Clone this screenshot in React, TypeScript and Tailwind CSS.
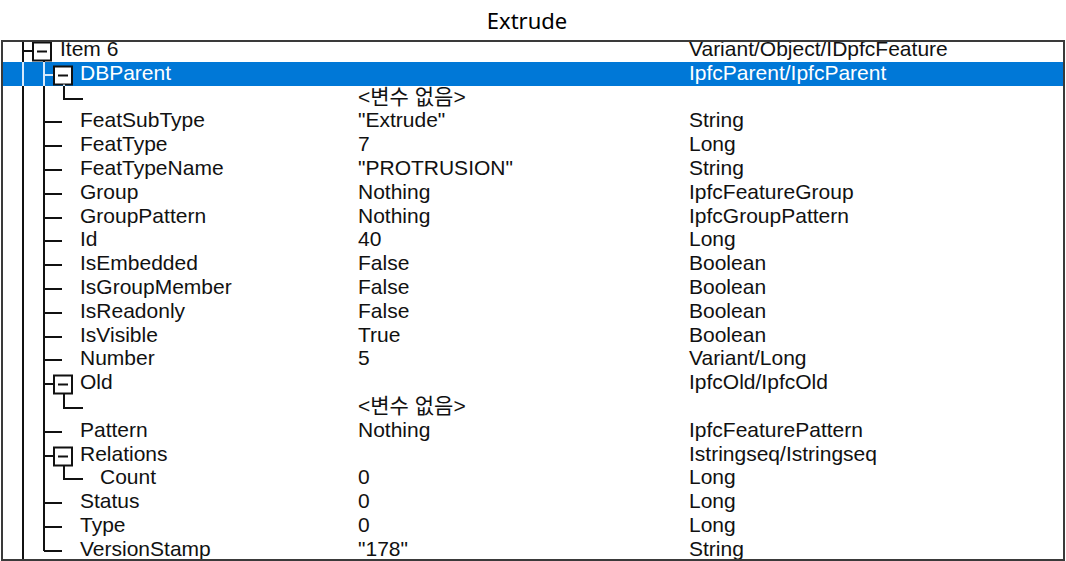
import React from 'react';

type Kind = 'root' | 'branch' | 'leaf' | 'last' | 'child';

type Row = {
  name?: string;
  value?: string;
  type?: string;
  kind: Kind;
  selected?: boolean;
};

const rows: Row[] = [
  { name: 'Item 6', type: 'Variant/Object/IDpfcFeature', kind: 'root' },
  { name: 'DBParent', type: 'IpfcParent/IpfcParent', kind: 'branch', selected: true },
  { value: '<변수 없음>', kind: 'child' },
  { name: 'FeatSubType', value: '"Extrude"', type: 'String', kind: 'leaf' },
  { name: 'FeatType', value: '7', type: 'Long', kind: 'leaf' },
  { name: 'FeatTypeName', value: '"PROTRUSION"', type: 'String', kind: 'leaf' },
  { name: 'Group', value: 'Nothing', type: 'IpfcFeatureGroup', kind: 'leaf' },
  { name: 'GroupPattern', value: 'Nothing', type: 'IpfcGroupPattern', kind: 'leaf' },
  { name: 'Id', value: '40', type: 'Long', kind: 'leaf' },
  { name: 'IsEmbedded', value: 'False', type: 'Boolean', kind: 'leaf' },
  { name: 'IsGroupMember', value: 'False', type: 'Boolean', kind: 'leaf' },
  { name: 'IsReadonly', value: 'False', type: 'Boolean', kind: 'leaf' },
  { name: 'IsVisible', value: 'True', type: 'Boolean', kind: 'leaf' },
  { name: 'Number', value: '5', type: 'Variant/Long', kind: 'leaf' },
  { name: 'Old', type: 'IpfcOld/IpfcOld', kind: 'branch' },
  { value: '<변수 없음>', kind: 'child' },
  { name: 'Pattern', value: 'Nothing', type: 'IpfcFeaturePattern', kind: 'leaf' },
  { name: 'Relations', type: 'Istringseq/Istringseq', kind: 'branch' },
  { name: 'Count', value: '0', type: 'Long', kind: 'child' },
  { name: 'Status', value: '0', type: 'Long', kind: 'leaf' },
  { name: 'Type', value: '0', type: 'Long', kind: 'leaf' },
  { name: 'VersionStamp', value: '"178"', type: 'String', kind: 'last' },
];

// x of the tree guide lines, inside the list
const L0 = 20;
const L1 = 41;
const L2 = 61;
const YC = 13;

const Box = ({ x, down, line }: { x: number; down: number; line: string }) => (
  <g>
    <rect x={x} y={4.5} width={18} height={18} fill="#fff" stroke="#111" strokeWidth={2} />
    <line x1={x + 4} y1={13.5} x2={x + 14} y2={13.5} stroke="#111" strokeWidth={2} />
    <line x1={down} y1={22.5} x2={down} y2={24} stroke={line} strokeWidth={2} />
  </g>
);

const TreeLines = ({ kind, selected }: { kind: Kind; selected?: boolean }) => {
  const c = selected ? '#d6e9fb' : '#111';
  const w = kind === 'child' ? 97 : kind === 'root' ? 57 : 77;
  return (
    <svg width={w} height={24} className="shrink-0 overflow-visible">
      <line x1={L0} y1={0} x2={L0} y2={24} stroke={c} strokeWidth={2} />
      {kind === 'root' && (
        <g>
          <line x1={L0} y1={YC} x2={29} y2={YC} stroke={c} strokeWidth={2} />
          <Box x={30} down={L1} line={c} />
        </g>
      )}
      {kind !== 'root' && (
        <line x1={L1} y1={0} x2={L1} y2={kind === 'last' ? YC : 24} stroke={c} strokeWidth={2} />
      )}
      {kind === 'branch' && (
        <g>
          <line x1={L1} y1={YC} x2={50} y2={YC} stroke={c} strokeWidth={2} />
          <Box x={51} down={L2} line={c} />
        </g>
      )}
      {(kind === 'leaf' || kind === 'last') && (
        <line x1={L1} y1={YC} x2={59} y2={YC} stroke={c} strokeWidth={2} />
      )}
      {kind === 'child' && (
        <g>
          <line x1={L2} y1={0} x2={L2} y2={YC} stroke={c} strokeWidth={2} />
          <line x1={L2 - 1} y1={YC} x2={80} y2={YC} stroke={c} strokeWidth={2} />
        </g>
      )}
    </svg>
  );
};

const App = () => {
  return (
    <div className="w-[1066px] h-[561px] bg-white overflow-hidden">
      <div className="h-10 flex items-center justify-center pr-[12px] text-[22px] text-black font-['Noto_Sans',sans-serif]">
        Extrude
      </div>
      <div className="ml-[1px] w-[1064px] h-[521px] border-2 border-[#3a3a3a] overflow-hidden">
        <div className="mt-[-4px] font-['Liberation_Sans','Noto_Sans_CJK_KR',sans-serif] text-[21px]">
          {rows.map((row, i) => (
            <div
              key={i}
              className={`flex h-[23.8px] items-start ${
                row.selected ? 'bg-[#0078d7] text-white' : 'text-[#111]'
              }`}
            >
              <div className="flex w-[355px] shrink-0">
                <TreeLines kind={row.kind} selected={row.selected} />
                <span className="leading-[22px] whitespace-nowrap">{row.name}</span>
              </div>
              <div className="w-[331px] shrink-0 leading-[22px] whitespace-nowrap">{row.value}</div>
              <div className="leading-[22px] whitespace-nowrap">{row.type}</div>
            </div>
          ))}
        </div>
      </div>
    </div>
  );
};

export default App;
